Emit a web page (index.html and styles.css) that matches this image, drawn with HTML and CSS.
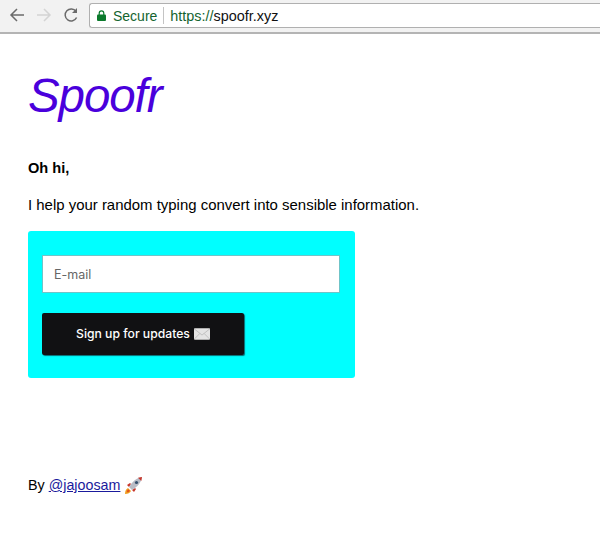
FILE: index.html
```html
<!DOCTYPE html>
<html lang="en">
<head>
<meta charset="utf-8">
<title>Spoofr</title>
<link rel="stylesheet" href="styles.css">
</head>
<body>
<header class="chrome">
  <nav class="nav">
    <svg class="nav-icon" width="18" height="18" viewBox="0 0 18 18"><path d="M16 9H3M9 3L3 9l6 6" fill="none" stroke="#6b6b6b" stroke-width="1.5"/></svg>
    <svg class="nav-icon" width="18" height="18" viewBox="0 0 18 18"><path d="M2 9h13M9 3l6 6-6 6" fill="none" stroke="#d4d4d4" stroke-width="1.5"/></svg>
    <svg class="nav-icon" width="18" height="18" viewBox="0 0 18 18"><path d="M14.6 11.500A6 6 0 1 1 14 5.400" fill="none" stroke="#6b6b6b" stroke-width="1.500"/><path d="M15 2v5h-5z" fill="#6b6b6b"/></svg>
  </nav>
  <div class="omnibox">
    <svg class="lock" width="9" height="11" viewBox="0 0 9 11"><path d="M2.200 5V3.200a2.300 2.300 0 0 1 4.600 0V5" fill="none" stroke="#0b7a2c" stroke-width="1.200"/><rect y="4.500" width="9" height="6.500" rx="1" fill="#0b7a2c"/></svg>
    <span class="secure">Secure</span>
    <span class="sep"></span>
    <span class="url"><span class="scheme">https://</span>spoofr.xyz</span>
  </div>
</header>
<main class="page">
  <h1 class="logo">Spoofr</h1>
  <p class="hello">Oh hi,</p>
  <p class="intro">I help your random typing convert into sensible information.</p>
  <form class="signup">
    <input class="email" type="text" placeholder="E-mail">
    <button class="submit" type="button">Sign up for updates
      <svg class="mail" width="16" height="12" viewBox="0 0 15 11"><rect width="15" height="11" rx="1" fill="#e4e4e4"/><path d="M0 .5l7.500 6 7.500-6M0 10.500l5.500-5.500M15 10.500L9.500 5" fill="none" stroke="#b5b5b5" stroke-width=".7"/></svg>
    </button>
  </form>
  <p class="byline">By <a href="#">@jajoosam</a>
    <svg class="rocket" width="19" height="19" viewBox="0 0 19 19"><path d="M1 18c0-3 1-5 3-6l3 3c-1 2-3 3-6 3z" fill="#f0a020"/><path d="M2.800 16.200c0-1.500.6-2.500 1.500-3l1.500 1.500c-.5 1-1.500 1.500-3 1.500z" fill="#e2521d"/><path d="M3 9l3-2 1 1-2 3zM10 16l2-3-1-1-3 2z" fill="#c8362b"/><path d="M5 11C8 6 12 2 18 1c-1 6-5 10-10 13z" fill="#b9bcc6"/><path d="M14 1.700L18 1l-.7 4z" fill="#c8362b"/><circle cx="12.500" cy="6.500" r="1.600" fill="#35506e"/></svg>
  </p>
</main>
</body>
</html>
```
FILE: styles.css
```css
* { box-sizing: border-box; }
html, body { margin: 0; padding: 0; }
body {
  background: #fff;
  color: #000;
  font-family: "Liberation Sans", Arial, sans-serif;
  height: 549px;
  overflow: hidden;
}
.chrome {
  height: 34px;
  background: #f2f2f2;
  border-bottom: 2px solid #b4b4b4;
  display: flex;
  align-items: flex-start;
  padding: 3px 0 0 8px;
}
.nav { display: flex; gap: 9px; margin-top: 3px; }
.nav-icon { display: block; }
.omnibox {
  flex: 1;
  height: 25px;
  margin-left: 9px;
  background: #fff;
  border: 1px solid #b0b0b0;
  border-right: 0;
  border-radius: 3px 0 0 3px;
  display: flex;
  align-items: center;
  padding-left: 7px;
  font-size: 14px;
}
.lock { margin-right: 7px; }
.secure { color: #14642f; }
.sep { width: 1px; height: 17px; background: #c4c4c4; margin: 0 6px; }
.scheme { color: #14642f; }
.url { color: #111; font-size: 14.400px; }
.page { padding: 0 0 0 28px; }
.logo {
  margin: 33px 0 0;
  font-size: 47.500px;
  line-height: 58px;
  font-weight: 400;
  font-style: italic;
  letter-spacing: -1.100px;
  color: #4a00dc;
}
.hello { margin: 33px 0 0; font-size: 14.600px; line-height: 20px; font-weight: 700; }
.intro { margin: 17px 0 0; font-size: 14.950px; line-height: 20px; }
.signup {
  width: 327px;
  height: 147px;
  margin-top: 16px;
  padding: 24px 14px 0;
  background: #00ffff;
  border-radius: 3px;
  display: flex;
  flex-direction: column;
  align-items: flex-start;
  gap: 20px;
}
.email {
  width: 298px;
  height: 38px;
  border: 1px solid #6fc4c8;
  background: #fff;
  padding: 0 11px;
  font: 12.500px "Inter", "Liberation Sans", sans-serif;
  border-radius: 0;
}
.email::placeholder { color: #666; opacity: 1; }
.submit {
  width: 202px;
  height: 42px;
  background: #111113;
  color: #fff;
  border: 0;
  border-radius: 2px;
  box-shadow: 1px 1px 1px #0a6a70;
  font: 500 12.200px "Inter", "Liberation Sans", sans-serif;
  display: flex;
  align-items: center;
  justify-content: center;
  gap: 4px;
  padding: 0 0 1px;
}
.mail { display: block; }
.byline {
  margin: 97px 0 0;
  font-size: 14.300px;
  line-height: 20px;
  display: flex;
  align-items: center;
  gap: 4px;
}
.byline a { color: #1a1a9c; }
.rocket { display: block; }
```
